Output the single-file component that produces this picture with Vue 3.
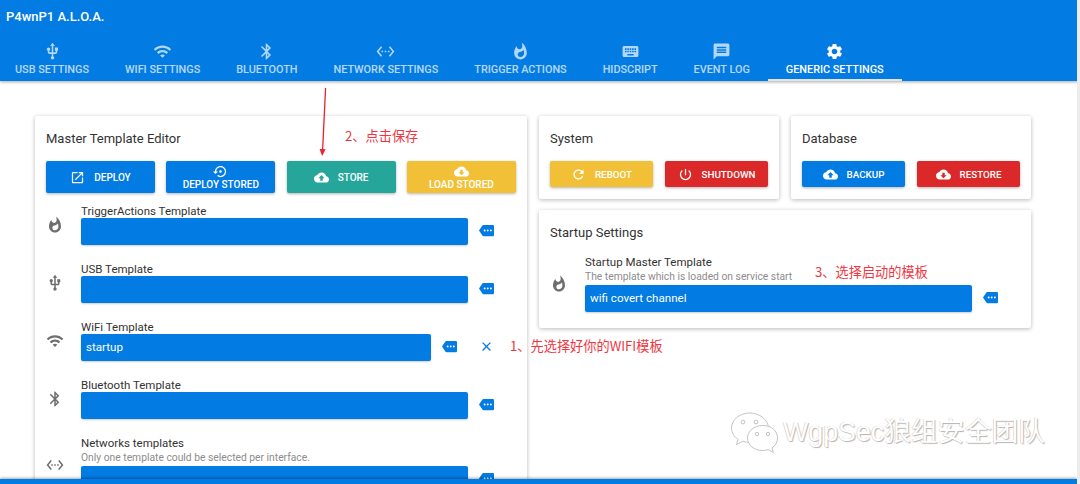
<script setup>
const icons = {
  usb: 'M15 7v4h1v2h-3V5h2l-3-4-3 4h2v8H8v-2.07c.7-.37 1.2-1.08 1.2-1.93 0-1.21-.99-2.2-2.2-2.2-1.21 0-2.2.99-2.2 2.2 0 .85.5 1.56 1.2 1.93V13c0 1.11.89 2 2 2h3v3.05c-.71.37-1.2 1.1-1.2 1.95 0 1.22.99 2.2 2.2 2.2 1.21 0 2.2-.98 2.2-2.2 0-.85-.49-1.58-1.2-1.95V15h3c1.11 0 2-.89 2-2v-2h1V7h-4z',
  wifi: 'M1 9l2 2c4.97-4.97 13.03-4.97 18 0l2-2C16.93 2.93 7.08 2.93 1 9zm8 8l3 3 3-3c-1.65-1.66-4.34-1.66-6 0zm-4-4l2 2c2.76-2.76 7.24-2.76 10 0l2-2C15.14 9.14 8.87 9.14 5 13z',
  bluetooth: 'M17.71 7.71L12 2h-1v7.59L6.41 5 5 6.41 10.59 12 5 17.59 6.41 19 11 14.41V22h1l5.71-5.71-4.3-4.29 4.3-4.29zM13 5.83l1.88 1.88L13 9.59V5.83zm1.88 10.46L13 18.17v-3.76l1.88 1.88z',
  ethernet: 'M7.77 6.76L6.23 5.48.82 12l5.41 6.52 1.54-1.28L3.42 12l4.35-5.24zM7 13h2v-2H7v2zm10-2h-2v2h2v-2zm-6 2h2v-2h-2v2zm6.77-7.52l-1.54 1.28L20.58 12l-4.35 5.24 1.54 1.28L23.18 12l-5.41-6.52z',
  whatshot: 'M13.5.67s.74 2.65.74 4.8c0 2.06-1.35 3.73-3.41 3.73-2.07 0-3.63-1.67-3.63-3.73l.03-.36C5.21 7.51 4 10.62 4 14c0 4.42 3.58 8 8 8s8-3.58 8-8C20 8.61 17.41 3.8 13.5.67zM11.71 19c-1.78 0-3.22-1.4-3.22-3.14 0-1.62 1.05-2.76 2.81-3.12 1.77-.36 3.6-1.21 4.62-2.58.39 1.29.59 2.65.59 4.04 0 2.65-2.15 4.8-4.8 4.8z',
  keyboard: 'M20 5H4c-1.1 0-1.99.9-1.99 2L2 17c0 1.1.9 2 2 2h16c1.1 0 2-.9 2-2V7c0-1.1-.9-2-2-2zm-9 3h2v2h-2V8zm0 3h2v2h-2v-2zM8 8h2v2H8V8zm0 3h2v2H8v-2zm-1 2H5v-2h2v2zm0-3H5V8h2v2zm9 7H8v-2h8v2zm0-4h-2v-2h2v2zm0-3h-2V8h2v2zm3 3h-2v-2h2v2zm0-3h-2V8h2v2z',
  message: 'M20 2H4c-1.1 0-1.99.9-1.99 2L2 22l4-4h14c1.1 0 2-.9 2-2V4c0-1.1-.9-2-2-2zm-2 12H6v-2h12v2zm0-3H6V9h12v2zm0-3H6V6h12v2z',
  settings: 'M19.14 12.94c.04-.3.06-.61.06-.94 0-.32-.02-.64-.07-.94l2.03-1.58c.18-.14.23-.41.12-.61l-1.92-3.32c-.12-.22-.37-.29-.59-.22l-2.39.96c-.5-.38-1.03-.7-1.62-.94l-.36-2.54c-.04-.24-.24-.41-.48-.41h-3.84c-.24 0-.43.17-.47.41l-.36 2.54c-.59.24-1.13.57-1.62.94l-2.39-.96c-.22-.08-.47 0-.59.22L2.74 8.87c-.12.21-.08.47.12.61l2.03 1.58c-.05.3-.09.63-.09.94s.02.64.07.94l-2.03 1.58c-.18.14-.23.41-.12.61l1.92 3.32c.12.22.37.29.59.22l2.39-.96c.5.38 1.03.7 1.62.94l.36 2.54c.05.24.24.41.48.41h3.84c.24 0 .44-.17.47-.41l.36-2.54c.59-.24 1.13-.56 1.62-.94l2.39.96c.22.08.47 0 .59-.22l1.92-3.32c.12-.22.07-.47-.12-.61l-2.01-1.58zM12 15.6c-1.98 0-3.6-1.62-3.6-3.6s1.62-3.6 3.6-3.6 3.6 1.62 3.6 3.6-1.62 3.6-3.6 3.6z',
  launch: 'M19 19H5V5h7V3H5c-1.11 0-2 .9-2 2v14c0 1.1.89 2 2 2h14c1.1 0 2-.9 2-2v-7h-2v7zM14 3v2h3.59l-9.83 9.83 1.41 1.41L19 6.41V10h2V3h-7z',
  restore: 'M14 12c0-1.1-.9-2-2-2s-2 .9-2 2 .9 2 2 2 2-.9 2-2zm-2-9c-4.97 0-9 4.03-9 9H0l4 4 4-4H5c0-3.87 3.13-7 7-7s7 3.13 7 7-3.13 7-7 7c-1.51 0-2.91-.49-4.06-1.3l-1.42 1.44C8.04 20.3 9.94 21 12 21c4.97 0 9-4.03 9-9s-4.03-9-9-9z',
  upload: 'M19.35 10.04C18.67 6.59 15.64 4 12 4 9.11 4 6.6 5.64 5.35 8.04 2.34 8.36 0 10.91 0 14c0 3.31 2.69 6 6 6h13c2.76 0 5-2.24 5-5 0-2.64-2.05-4.78-4.65-4.96zM14 13v4h-4v-4H7l5-5 5 5h-3z',
  download: 'M19.35 10.04C18.67 6.59 15.64 4 12 4 9.11 4 6.6 5.64 5.35 8.04 2.34 8.36 0 10.91 0 14c0 3.31 2.69 6 6 6h13c2.76 0 5-2.24 5-5 0-2.64-2.05-4.78-4.65-4.96zM17 13l-5 5-5-5h3V9h4v4h3z',
  refresh: 'M17.65 6.35C16.2 4.9 14.21 4 12 4c-4.42 0-7.99 3.58-7.99 8s3.57 8 7.99 8c3.73 0 6.84-2.55 7.73-6h-2.08c-.82 2.33-3.04 4-5.65 4-3.31 0-6-2.69-6-6s2.69-6 6-6c1.66 0 3.14.69 4.22 1.78L13 11h7V4l-2.35 2.35z',
  power: 'M13 3h-2v10h2V3zm4.83 2.17l-1.42 1.42C17.99 7.86 19 9.81 19 12c0 3.87-3.13 7-7 7s-7-3.13-7-7c0-2.19 1.01-4.14 2.58-5.42L6.17 5.17C4.23 6.82 3 9.26 3 12c0 4.97 4.03 9 9 9s9-4.03 9-9c0-2.74-1.23-5.18-3.17-6.83z',
  more: 'M22 3H7c-.69 0-1.23.35-1.59.88L0 12l5.41 8.11c.36.53.97.89 1.66.89H22c1.1 0 2-.9 2-2V5c0-1.1-.9-2-2-2zM9 13.5c-.83 0-1.5-.67-1.5-1.5s.67-1.5 1.5-1.5 1.5.67 1.5 1.5-.67 1.5-1.5 1.5zm5 0c-.83 0-1.5-.67-1.5-1.5s.67-1.5 1.5-1.5 1.5.67 1.5 1.5-.67 1.5-1.5 1.5zm5 0c-.83 0-1.5-.67-1.5-1.5s.67-1.5 1.5-1.5 1.5.67 1.5 1.5-.67 1.5-1.5 1.5z',
  close: 'M19 6.41L17.59 5 12 10.59 6.41 5 5 6.41 10.59 12 5 17.59 6.41 19 12 13.41 17.59 19 19 17.59 13.41 12z',
}

const tabs = [
  { label: 'USB Settings', icon: 'usb' },
  { label: 'WiFi Settings', icon: 'wifi' },
  { label: 'Bluetooth', icon: 'bluetooth' },
  { label: 'Network Settings', icon: 'ethernet' },
  { label: 'Trigger Actions', icon: 'whatshot' },
  { label: 'HIDScript', icon: 'keyboard' },
  { label: 'Event Log', icon: 'message' },
  { label: 'Generic Settings', icon: 'settings', active: true },
]

const editorButtons = [
  { label: 'Deploy', icon: 'launch', color: 'primary' },
  { label: 'Deploy Stored', icon: 'restore', color: 'primary', stacked: true },
  { label: 'Store', icon: 'upload', color: 'teal' },
  { label: 'Load Stored', icon: 'download', color: 'amber', stacked: true },
]

const templates = [
  { label: 'TriggerActions Template', icon: 'whatshot' },
  { label: 'USB Template', icon: 'usb' },
  { label: 'WiFi Template', icon: 'wifi', value: 'startup', clearable: true },
  { label: 'Bluetooth Template', icon: 'bluetooth' },
  { label: 'Networks templates', hint: 'Only one template could be selected per interface.', icon: 'ethernet' },
]
</script>

<template>
  <div class="page">
    <header class="header">
      <div class="title">P4wnP1 A.L.O.A.</div>
      <nav class="tabs">
        <div v-for="t in tabs" :key="t.label" class="tab" :class="{ active: t.active }">
          <svg class="tab-icon" viewBox="0 0 24 24"><path :d="icons[t.icon]" /></svg>
          <span>{{ t.label }}</span>
        </div>
      </nav>
    </header>

    <main class="content">
      <section class="card editor">
        <h2>Master Template Editor</h2>
        <div class="btn-grid">
          <div
            v-for="b in editorButtons"
            :key="b.label"
            class="btn"
            :class="[b.color, { stacked: b.stacked }]"
          >
            <svg viewBox="0 0 24 24"><path :d="icons[b.icon]" /></svg>
            <span>{{ b.label }}</span>
          </div>
        </div>
        <div v-for="row in templates" :key="row.label" class="row">
          <svg class="row-icon" viewBox="0 0 24 24"><path :d="icons[row.icon]" /></svg>
          <div class="row-main">
            <div class="row-label">{{ row.label }}</div>
            <div v-if="row.hint" class="row-hint">{{ row.hint }}</div>
            <div class="field">{{ row.value }}</div>
          </div>
          <div class="row-side">
            <svg viewBox="0 0 24 24"><path :d="icons.more" /></svg>
          </div>
          <div v-if="row.clearable" class="row-side clear">
            <svg viewBox="0 0 24 24"><path :d="icons.close" /></svg>
          </div>
        </div>
      </section>

      <div class="right">
        <div class="right-top">
          <section class="card">
            <h2>System</h2>
            <div class="btn-pair">
              <div class="btn amber short">
                <svg viewBox="0 0 24 24"><path :d="icons.refresh" /></svg>
                <span>Reboot</span>
              </div>
              <div class="btn red short">
                <svg viewBox="0 0 24 24"><path :d="icons.power" /></svg>
                <span>Shutdown</span>
              </div>
            </div>
          </section>
          <section class="card">
            <h2>Database</h2>
            <div class="btn-pair">
              <div class="btn primary short">
                <svg viewBox="0 0 24 24"><path :d="icons.upload" /></svg>
                <span>Backup</span>
              </div>
              <div class="btn red short">
                <svg viewBox="0 0 24 24"><path :d="icons.download" /></svg>
                <span>Restore</span>
              </div>
            </div>
          </section>
        </div>
        <section class="card startup">
          <h2>Startup Settings</h2>
          <div class="row">
            <svg class="row-icon" viewBox="0 0 24 24"><path :d="icons.whatshot" /></svg>
            <div class="row-main">
              <div class="row-label">Startup Master Template</div>
              <div class="row-hint">The template which is loaded on service start</div>
              <div class="field">wifi covert channel</div>
            </div>
            <div class="row-side">
              <svg viewBox="0 0 24 24"><path :d="icons.more" /></svg>
            </div>
          </div>
        </section>
      </div>
    </main>

    <div class="bottom-bar"></div>
    <div class="scrollbar"></div>

    <!-- annotations pasted over the screenshot -->
    <svg class="arrow" width="20" height="76" viewBox="0 0 20 76">
      <path d="M10.6 2 L7.6 64" stroke="#e8202f" stroke-width="1.3" fill="none" />
      <path d="M4.6 63 L10.6 63.3 L7.2 70 Z" fill="#e8202f" />
    </svg>
    <div class="note note-store">2、点击保存</div>
    <div class="note note-wifi">1、先选择好你的WIFI模板</div>
    <div class="note note-start">3、选择启动的模板</div>

    <div class="watermark">
      <svg width="50" height="42" viewBox="0 0 50 42" fill="#fff" stroke="#c4c4c4" stroke-width="1">
        <path d="M21 2C10.5 2 2.5 8.8 2.5 17c0 4.7 2.6 8.7 6.6 11.500L7.500 33.500l6.300-3.200c2.300.7 4.700 1.200 7.200 1.200 9.500 0 18.500-6.500 18.500-14.500S30.500 2 21 2z" />
        <path d="M33.500 14.500c-8.300 0-15 5.600-15 12.500s6.700 12.500 15 12.500c1.900 0 3.800-.3 5.500-.9l5.300 2.900-1.300-4.600c3.500-2.300 5.500-5.900 5.500-9.900 0-6.900-5.700-12.500-14.500-12.500z" />
        <circle cx="14" cy="11" r="1.900" fill="none" />
        <circle cx="27" cy="11" r="1.900" fill="none" />
        <circle cx="28" cy="23" r="1.700" fill="none" />
        <circle cx="39" cy="23" r="1.700" fill="none" />
      </svg>
      <span>WgpSec狼组安全团队</span>
    </div>
  </div>
</template>

<style>
html, body {
  margin: 0;
  background: #fff;
}
</style>

<style scoped>
.page {
  position: relative;
  width: 1080px;
  height: 484px;
  overflow: hidden;
  background: #fff;
  font-family: Roboto, "Noto Sans CJK SC", sans-serif;
  color: #333;
}
.header {
  height: 81px;
  background: #027be3;
  color: #fff;
  box-shadow: 0 1px 3px rgba(0, 0, 0, 0.35);
  position: relative;
  z-index: 1;
}
.title {
  height: 36px;
  padding-left: 6px;
  box-sizing: border-box;
  padding-top: 9px;
  font-size: 13px;
  line-height: 16px;
  font-weight: 500;
}
.tabs {
  display: flex;
  height: 45px;
  margin-left: -3px;
}
.tab {
  padding: 6px 18px 0;
  display: flex;
  flex-direction: column;
  align-items: center;
  font-size: 10.85px;
  line-height: 13px;
  font-weight: 500;
  text-transform: uppercase;
  white-space: nowrap;
  opacity: 0.7;
  box-sizing: border-box;
}
.tab.active {
  opacity: 1;
  border-bottom: 2px solid #e4e4e4;
}
.tab-icon {
  width: 19px;
  height: 19px;
  fill: #fff;
  margin-bottom: 2px;
}
.content {
  display: flex;
  align-items: flex-start;
  gap: 12px;
  padding: 35px 0 0 35px;
}
.card {
  background: #fff;
  border-radius: 2px;
  padding: 11px 11px 12px;
  box-shadow: 0 1px 4px rgba(0, 0, 0, 0.28);
  box-sizing: border-box;
}
.card h2 {
  margin: 0 0 11px;
  padding-top: 1px;
  font-size: 13px;
  line-height: 22px;
  font-weight: 400;
  color: #333;
}
.editor {
  width: 492px;
}
.btn-grid {
  display: grid;
  grid-template-columns: repeat(4, 109px);
  gap: 11.3px;
  margin-bottom: 11px;
}
.btn {
  height: 32px;
  border-radius: 2px;
  color: #fff;
  display: flex;
  align-items: center;
  justify-content: center;
  gap: 9px;
  font-size: 10px;
  font-weight: 500;
  text-transform: uppercase;
  box-shadow: 0 1px 3px rgba(0, 0, 0, 0.3);
}
.btn svg {
  width: 15px;
  height: 15px;
  fill: #fff;
}
.btn.stacked {
  flex-direction: column;
  gap: 0;
  line-height: 11px;
}
.btn.short {
  height: 26px;
  font-size: 9.8px;
}
.primary { background: #027be3; }
.teal { background: #26a69a; }
.amber { background: #f2c037; }
.red { background: #db2828; }
.row {
  display: flex;
  align-items: center;
  width: 459px;
  margin-bottom: 17px;
}
.row-icon {
  width: 18px;
  height: 18px;
  fill: #6e6e6e;
  margin-right: 17px;
  flex: none;
}
.row-main {
  flex: 1;
  min-width: 0;
}
.row-label {
  font-size: 11.5px;
  line-height: 14px;
  color: #333;
}
.row-hint {
  font-size: 10.3px;
  line-height: 16px;
  color: #8c8c8c;
}
.field {
  height: 27px;
  line-height: 27px;
  background: #027be3;
  border-radius: 2px;
  color: #fff;
  font-size: 11.6px;
  padding: 0 5px;
  box-sizing: border-box;
  box-shadow: 0 1px 2px rgba(0, 0, 0, 0.2);
}
.row-side {
  width: 37px;
  flex: none;
  align-self: flex-end;
  margin-bottom: 7px;
  display: flex;
  justify-content: center;
  height: 15px;
}
.row-side svg {
  width: 15px;
  height: 15px;
  fill: #027be3;
}
.right {
  width: 492px;
  display: flex;
  flex-direction: column;
  gap: 11px;
}
.right-top {
  display: flex;
  gap: 12px;
}
.right-top .card {
  width: 240px;
}
.btn-pair {
  display: grid;
  grid-template-columns: 1fr 1fr;
  gap: 12px;
}
.startup {
  padding-bottom: 16px;
}
.startup .row {
  margin-bottom: 0;
}
.bottom-bar {
  position: absolute;
  left: 0;
  right: 3px;
  bottom: 0;
  height: 5px;
  background: #027be3;
  box-shadow: 0 -1px 3px rgba(0, 0, 0, 0.35);
  z-index: 2;
}
.scrollbar {
  position: absolute;
  top: 0;
  right: 0;
  bottom: 0;
  width: 3px;
  background: #ececec;
  z-index: 3;
}
.arrow {
  position: absolute;
  left: 315px;
  top: 86px;
  z-index: 4;
}
.note {
  position: absolute;
  color: #f0353f;
  font-size: 13.2px;
  line-height: 16px;
  white-space: nowrap;
  font-family: "Noto Sans CJK SC", Roboto, sans-serif;
  z-index: 4;
}
.note-store { left: 345px; top: 128px; }
.note-wifi { left: 510px; top: 338px; }
.note-start { left: 815px; top: 264px; }
.watermark {
  position: absolute;
  left: 729px;
  top: 411px;
  display: flex;
  align-items: center;
  gap: 4px;
  z-index: 4;
}
.watermark span {
  font-size: 26.8px;
  line-height: 42px;
  color: #fff;
  font-family: "Liberation Sans", "Noto Sans CJK SC", sans-serif;
  text-shadow: 1px 1px 1px #b4b4b4, -0.5px -0.5px 0 #c8c8c8;
  white-space: nowrap;
}
</style>
